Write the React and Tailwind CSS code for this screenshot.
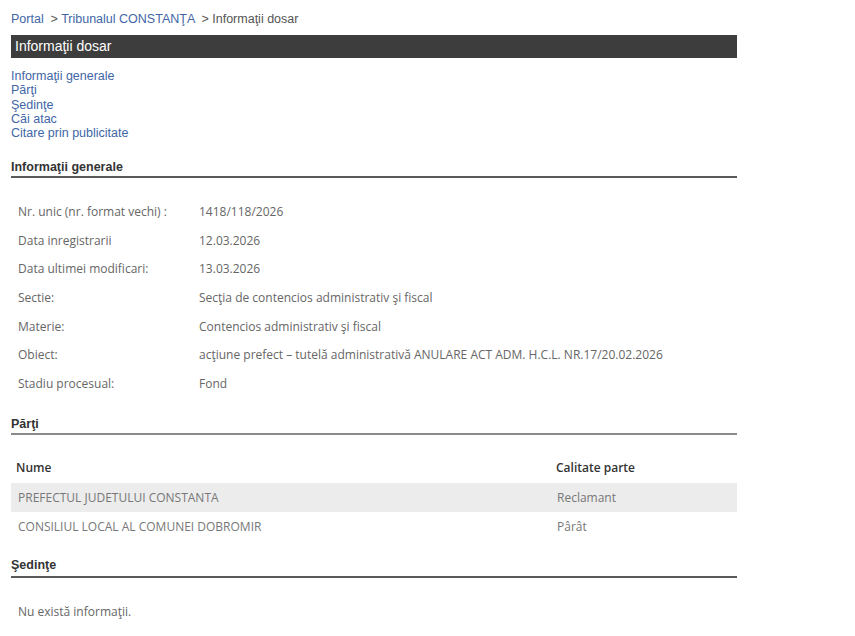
import React from 'react';

const details = [
  ['Nr. unic (nr. format vechi) :', '1418/118/2026'],
  ['Data inregistrarii', '12.03.2026'],
  ['Data ultimei modificari:', '13.03.2026'],
  ['Sectie:', 'Secţia de contencios administrativ şi fiscal'],
  ['Materie:', 'Contencios administrativ şi fiscal'],
  ['Obiect:', 'acţiune prefect – tutelă administrativă ANULARE ACT ADM. H.C.L. NR.17/20.02.2026'],
  ['Stadiu procesual:', 'Fond'],
];

const parti = [
  ['PREFECTUL JUDETULUI CONSTANTA', 'Reclamant'],
  ['CONSILIUL LOCAL AL COMUNEI DOBROMIR', 'Pârât'],
];

const arial = { fontFamily: '"Liberation Sans", Arial, sans-serif' };
const data = { fontFamily: '"Open Sans", "DejaVu Sans", sans-serif' };

const SectionTitle = ({ children, line = 'border-[#5a5a5a]', h = 'h-[19px]' }) => (
    <div className={`${h} border-b-2 ${line} text-[12.5px] font-bold text-[#333] leading-[16px]`} style={arial}>
        {children}
    </div>
);

const App = () => {
    return (
        <div className="min-h-screen bg-white">
            <div className="w-[726px] ml-[11px] pt-[10px]">
                <div className="h-[18px] text-[12.5px] leading-[18px] text-[#555]" style={arial}>
                    <a className="text-[#4166a6]">Portal</a>
                    <span> &nbsp;&gt; </span>
                    <a className="text-[#4166a6]">Tribunalul CONSTANŢA</a>
                    <span> &nbsp;&gt; Informaţii dosar</span>
                </div>

                <div className="mt-[7px] h-[23px] bg-[#3d3d3d] text-white text-[14px] leading-[23px] pl-[4px]" style={arial}>
                    Informaţii dosar
                </div>

                <div className="mt-[11px] flex flex-col text-[12.5px] leading-[14.3px] text-[#4166a6]" style={arial}>
                    <a>Informaţii generale</a>
                    <a>Părţi</a>
                    <a>Şedinţe</a>
                    <a>Căi atac</a>
                    <a>Citare prin publicitate</a>
                </div>

                <div className="mt-[19px]">
                    <SectionTitle>Informaţii generale</SectionTitle>
                </div>

                <div className="mt-[19px] text-[12px] text-[#666]" style={data}>
                    {details.map(([k, v]) => (
                        <div key={k} className="flex h-[28.7px] items-center pl-[7px]">
                            <div className="w-[181px] shrink-0">{k}</div>
                            <div>{v}</div>
                        </div>
                    ))}
                </div>

                <div className="mt-[18px]">
                    <SectionTitle line="border-[#8a8a8a]">Părţi</SectionTitle>
                </div>

                <div className="mt-[18px] text-[12px]" style={data}>
                    <div className="flex h-[30px] items-center font-semibold text-[#333]">
                        <div className="w-[545px] pl-[5px]">Nume</div>
                        <div>Calitate parte</div>
                    </div>
                    {parti.map(([n, c], i) => (
                        <div key={n} className={`flex h-[29px] items-center text-[#777] ${i === 0 ? 'bg-[#ececec]' : ''}`}>
                            <div className="w-[546px] pl-[7px]">{n}</div>
                            <div>{c}</div>
                        </div>
                    ))}
                </div>

                <div className="mt-[16px]">
                    <SectionTitle h="h-[21px]">Şedinţe</SectionTitle>
                </div>

                <div className="mt-[25px] pl-[7px] text-[12px] text-[#666]" style={data}>
                    Nu există informaţii.
                </div>
            </div>
        </div>
    );
};

export default App;
